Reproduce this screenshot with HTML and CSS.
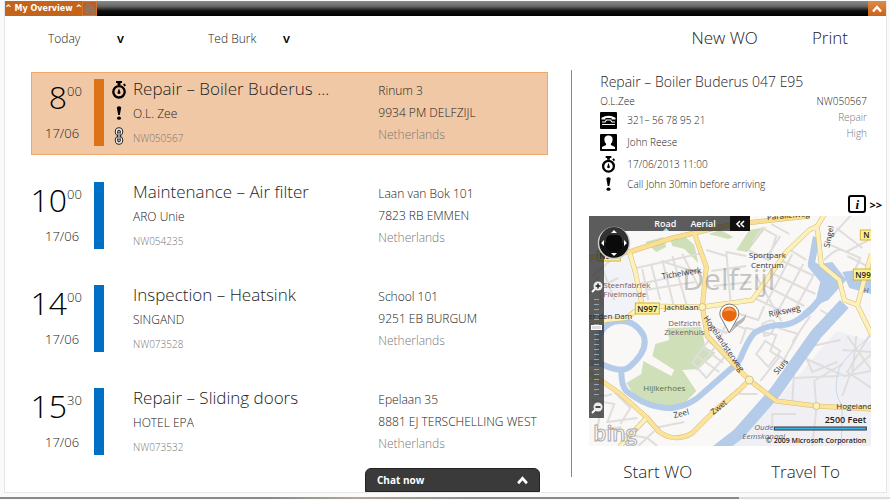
FILE: index.html
```
<!DOCTYPE html>
<html lang="en">
<head>
    <meta charset="UTF-8">
    <meta name="viewport" content="width=device-width, initial-scale=1.0">
    <title>My Overview</title>
    <link rel="stylesheet" href="styles.css">
</head>
<body>
    <!-- shared icons -->
    <svg class="sprite" aria-hidden="true">
        <symbol id="icon-timer" viewBox="0 0 16 18">
            <path d="M5 0h6v2H9.500v2h-3V2H5z"/>
            <path d="M12 3.500l1.500-1 1.500 1.700-1.500 1.300z"/>
            <circle cx="8" cy="10.800" r="5.700" fill="none" stroke="currentColor" stroke-width="2.400"/>
            <path d="M8 7.200l1.300 3.800a1.400 1.400 0 1 1-2.600 0z"/>
        </symbol>
        <symbol id="icon-alert" viewBox="0 0 6 14">
            <path d="M.8 1.500Q3-.8 5.200 1.500L3.800 9H2.200z"/>
            <ellipse cx="3" cy="12.200" rx="2" ry="1.600"/>
        </symbol>
        <symbol id="icon-link" viewBox="0 0 10 18">
            <g fill="none" stroke="#222" stroke-width="3.400">
                <rect x="2.500" y="2" width="5" height="5.500" rx="2.500"/>
                <rect x="2.500" y="10.500" width="5" height="5.500" rx="2.500"/>
            </g>
            <g fill="none" stroke="#eee" stroke-width="1.400">
                <rect x="2.500" y="2" width="5" height="5.500" rx="2.500"/>
                <rect x="2.500" y="10.500" width="5" height="5.500" rx="2.500"/>
            </g>
            <path d="M5 5v8" stroke="#222" stroke-width="3"/>
            <path d="M5 5.500v7" stroke="#eee" stroke-width="1.200"/>
        </symbol>
        <symbol id="icon-up" viewBox="0 0 10 8">
            <path d="M1 6.500l4-4.500 4 4.500" fill="none" stroke="currentColor" stroke-width="2.400"/>
        </symbol>
    </svg>

    <div class="window">
        <header class="titlebar">
            <button type="button" class="tab">^ My Overview ^</button>
            <button type="button" class="tab-settings" aria-label="Settings">
                <svg viewBox="0 0 12 12" class="settings-icon">
                    <g fill="none" stroke="#8f7868" stroke-width="1.400">
                        <circle cx="4" cy="3.500" r="2"/>
                        <circle cx="3.500" cy="8.500" r="1.500"/>
                        <circle cx="9" cy="9" r="1.800"/>
                        <path d="M5 5l3 3M8 3v2h2"/>
                    </g>
                </svg>
            </button>
            <button type="button" class="collapse" aria-label="Collapse">
                <svg class="collapse-icon"><use href="#icon-up"/></svg>
            </button>
        </header>

        <nav class="toolbar">
            <div class="filter filter-day">
                <select aria-label="Day"><option>Today</option></select>
                <span class="caret">v</span>
            </div>
            <div class="filter filter-person">
                <select aria-label="Engineer"><option>Ted Burk</option></select>
                <span class="caret">v</span>
            </div>
            <div class="toolbar-actions">
                <button type="button" class="action">New WO</button>
                <button type="button" class="action">Print</button>
            </div>
        </nav>

        <main class="content">
            <section class="orders">
                <article class="order selected">
                    <div class="time"><span class="hour">8</span><span class="minutes">00</span><span class="date">17/06</span></div>
                    <div class="bar"></div>
                    <div class="flags">
                        <svg class="flag-timer"><use href="#icon-timer"/></svg>
                        <svg class="flag-alert"><use href="#icon-alert"/></svg>
                        <svg class="flag-link"><use href="#icon-link"/></svg>
                    </div>
                    <div class="job">
                        <h2>Repair – Boiler Buderus ...</h2>
                        <p class="customer">O.L. Zee</p>
                        <p class="number">NW050567</p>
                    </div>
                    <address>
                        <p>Rinum 3</p>
                        <p>9934 PM DELFZIJL</p>
                        <p class="country">Netherlands</p>
                    </address>
                </article>

                <article class="order">
                    <div class="time"><span class="hour">10</span><span class="minutes">00</span><span class="date">17/06</span></div>
                    <div class="bar"></div>
                    <div class="flags"></div>
                    <div class="job">
                        <h2>Maintenance – Air filter</h2>
                        <p class="customer">ARO Unie</p>
                        <p class="number">NW054235</p>
                    </div>
                    <address>
                        <p>Laan van Bok 101</p>
                        <p>7823 RB EMMEN</p>
                        <p class="country">Netherlands</p>
                    </address>
                </article>

                <article class="order">
                    <div class="time"><span class="hour">14</span><span class="minutes">00</span><span class="date">17/06</span></div>
                    <div class="bar"></div>
                    <div class="flags"></div>
                    <div class="job">
                        <h2>Inspection – Heatsink</h2>
                        <p class="customer">SINGAND</p>
                        <p class="number">NW073528</p>
                    </div>
                    <address>
                        <p>School 101</p>
                        <p>9251 EB BURGUM</p>
                        <p class="country">Netherlands</p>
                    </address>
                </article>

                <article class="order">
                    <div class="time"><span class="hour">15</span><span class="minutes">30</span><span class="date">17/06</span></div>
                    <div class="bar"></div>
                    <div class="flags"></div>
                    <div class="job">
                        <h2>Repair – Sliding doors</h2>
                        <p class="customer">HOTEL EPA</p>
                        <p class="number">NW073532</p>
                    </div>
                    <address>
                        <p>Epelaan 35</p>
                        <p>8881 EJ TERSCHELLING WEST</p>
                        <p class="country">Netherlands</p>
                    </address>
                </article>
            </section>

            <section class="detail">
                <div class="detail-head">
                    <h1>Repair – Boiler Buderus 047 E95</h1>
                    <div class="detail-body">
                        <ul class="facts">
                            <li class="fact-customer">O.L.Zee</li>
                            <li>
                                <svg class="fact-icon" viewBox="0 0 17 17">
                                    <rect width="17" height="17" rx="1"/>
                                    <path d="M1.500 7.500V5.800Q8.500 1.500 15.500 5.800v1.700h-4V6h-6v1.500z" fill="#fff"/>
                                    <path d="M2 10h3l1.500-2h4l1.500 2h3M2 12.500h13" fill="none" stroke="#fff" stroke-width="1.200"/>
                                </svg>
                                <span>321– 56 78 95 21</span>
                            </li>
                            <li>
                                <svg class="fact-icon" viewBox="0 0 17 17">
                                    <rect width="17" height="17" rx="1"/>
                                    <path d="M8.500 1.500C5 1.500 4 4 4.500 6.500c.2 1.500.8 2.500 1.600 3.200V11L2 13v2h13v-2l-4.100-2V9.700c.8-.7 1.400-1.700 1.600-3.200.5-2.500-.5-5-4-5z" fill="#fff"/>
                                </svg>
                                <span>John Reese</span>
                            </li>
                            <li>
                                <svg class="fact-icon"><use href="#icon-timer"/></svg>
                                <span>17/06/2013 11:00</span>
                            </li>
                            <li class="fact-note">
                                <svg class="fact-icon"><use href="#icon-alert"/></svg>
                                <span>Call John 30min before arriving</span>
                            </li>
                        </ul>
                        <div class="meta">
                            <p class="meta-number">NW050567</p>
                            <p>Repair</p>
                            <p>High</p>
                        </div>
                    </div>
                </div>

                <div class="more">
                    <button type="button" class="info">i</button>
                    <a href="#" class="next">&gt;&gt;</a>
                </div>

                <div class="map">
                    <svg class="map-canvas" viewBox="0 0 283 230" preserveAspectRatio="xMidYMid slice">
                        <rect width="283" height="230" fill="#f9f8f6"/>
                        <path d="M0 36l41 0 6 20 7 34-16 12-38 2z" fill="#f2f3f8"/>
                        <path d="M188 185l60-70 35 10v105H142z" fill="#f0f0f4"/>

                        <!-- parks -->
                        <g fill="#cfdfb8">
                            <path d="M38 167l15-9 2-13 28 15 3-6-22-14 3-12 14-4-2-12 34-1 4 20 10 6-17 16-16 1 14 21-12 12-20 5-24-4z"/>
                            <path d="M57 26l18-5 3 10-10 5z"/>
                            <path d="M82 24l14-4 10 9 4 18-14-14-12-3z"/>
                            <path d="M148 34l13-20 17-3-19 25z"/>
                            <path d="M120 18l12-4 13 7-5 2z"/>
                        </g>

                        <!-- side streets -->
                        <g fill="none" stroke="#e0dddd" stroke-width="2">
                            <path d="M48 52l66-15M51 68l38-8M60 84l-6-31M72 84l-9-35M85 88L74 44M98 88L84 40M110 70L94 38M57 74l50-8M76 46l34 11"/>
                            <path d="M123 55l35-5M125 70l38-4M142 84l-4-48 20 4M118 34l20 6"/>
                            <path d="M181 56l46 22M174 68l42 22M166 82l34 16M192 44l34 16M202 34l16 10M204 38l-27 51M215 48l-26 48M226 58l-22 40M168 60l25 45"/>
                            <path d="M160 34l20 10 8-24-14-8-10 14M192 20l-14 22M183 8l18 10"/>
                            <path d="M236 44q14-15 22-8l22-12M240 28l32 14-12 26M248 12l26 20M262 0l-22 24M283 52l-24-12"/>
                            <path d="M122 110l16 7 10-20 22 7 6-14M130 126l9-21 18 8M152 128l6-16 30 7-6 16 9 6-19 24"/>
                            <path d="M104 146l16-21 18 14-20 23zM109 140l22 16M114 131l21 16M126 132l-18 22"/>
                            <path d="M174 108q14-8 12 2t-10 10zM190 112l20 6-18 32M204 126l18-26M232 94l14 8-10 14M168 138l9-13 15 10-12 16z"/>
                            <path d="M216 142l40 18 27-5M224 130l28-6M206 162l45-2M204 185l2-32-16-14M228 190l-2-25 28-17M228 193l-4 37M184 214v-16h24M218 142l6 14 25-10"/>
                            <path d="M259 120l24 34M283 116l-24 40 24 16M254 134l29 2M262 158l-8 22M268 120l-4 36 19-18"/>
                            <path d="M0 166q14-6 10 6t14 6M4 184l22 4-7 18 30-4M0 194l12 4-4 18 25-5M26 176l16 16-10 16M36 218l23 4 10 8M66 215l-16 15M96 206l-30 6M151 178h18"/>
                            <path d="M0 76l30-14M4 60l28-24M14 90l-5-30M14 52l12 32"/>
                        </g>

                        <!-- water -->
                        <g fill="none" stroke="#b4cbe9" stroke-linejoin="round">
                            <path d="M11 147V120q6-15 22-15 14 0 22 14 6 15-14 32-8 7-30-4H0M33 155q0 15 5 20 22 18 46 17 18-2 32-16l24-21q12-9 14-17 7-16 12-21 12-8 28-8 12 0 28-15" stroke-width="6"/>
                            <path d="M216 99q16-12 29-37l-22-14 5-27" stroke-width="7"/>
                            <path d="M128 235l22-17 37-42 41-58 28-30" stroke-width="12"/>
                        </g>
                        <path d="M219 50l25-4 14 18-18 20-14 6 6-24zM254 56l14-2 15 8v16l-22-6zM141 218l20-16 4 8-22 16z" fill="#b4cbe9"/>
                        <path d="M283 120q-24 18-32 32-8 24 3 38l-1 40" fill="none" stroke="#c6d8ef"/>

                        <!-- main roads: casing, then surface -->
                        <g fill="none" stroke="#d3bd78" stroke-width="5" stroke-linejoin="round">
                            <path d="M0 42l41-6 43-14 22-5 25-6 27-4 63-7"/>
                            <path d="M41 36l6 20 7 34 60 1 50-7 34-48 23-22 8-4 8-13M229 12l4 37 18 15 5 20 13 5M283 38l-14 51 14 29M0 106l38-4 16-12"/>
                            <path d="M106 17l12 34-4 40 5 29 30 32 12 12 27 21 40 5 55 3"/>
                            <path d="M161 164l-10 10-27 23-20 20q-17 10-33-1L58 201 31 177 0 156M59 201l-28 30"/>
                        </g>
                        <g fill="none" stroke="#fdf0b8" stroke-width="4" stroke-linejoin="round">
                            <path d="M41 36l6 20 7 34 60 1 50-7 34-48 23-22 8-4 8-13M229 12l4 37 18 15 5 20 13 5M283 38l-14 51 14 29M0 106l38-4 16-12M59 201l-28 30"/>
                            <path d="M0 42l41-6 43-14 22-5 25-6 27-4 63-7" stroke="#fadf90"/>
                            <path d="M106 17l12 34-4 40 5 29 30 32 12 12 27 21 40 5 55 3" stroke="#fbe39a"/>
                            <path d="M161 164l-10 10-27 23-20 20q-17 10-33-1L58 201 31 177 0 156" stroke="#fbe39a"/>
                        </g>
                        <g fill="#fdf0b8" stroke="#d5c387">
                            <circle cx="114" cy="91" r="3.500"/>
                            <circle cx="161" cy="164" r="4"/>
                            <circle cx="228" cy="190" r="3.500"/>
                        </g>

                        <!-- place names -->
                        <text x="94" y="74" class="city">Delfzijl</text>
                        <g class="place">
                            <text x="179" y="42" text-anchor="middle">Sportpark</text>
                            <text x="179" y="52" text-anchor="middle">Centrum</text>
                            <text x="15" y="72" class="poi">Steenfabriek</text>
                            <text x="15" y="81" class="poi">Fivelmonde</text>
                            <text x="96" y="110" text-anchor="middle" class="poi">Delfzicht</text>
                            <text x="96" y="119" text-anchor="middle" class="poi">Ziekenhuis</text>
                            <text x="55" y="175" class="park">Hijlkerhoes</text>
                            <text x="166" y="214" class="canal">Oude</text>
                            <text x="154" y="223" class="canal">Eemskanaal</text>
                            <text x="275" y="77" class="canal">H</text>
                        </g>
                        <g class="street">
                            <text transform="translate(74 63) rotate(-9)">Tichelwerk</text>
                            <text x="76" y="94">Jachtlaan</text>
                            <text transform="translate(181 101) rotate(-12)">Rijksweg</text>
                            <text transform="translate(241 32) rotate(-78)">Singel</text>
                            <text transform="translate(189 159) rotate(-50)">Sluis</text>
                            <text transform="translate(86 202) rotate(-14)">Zeel</text>
                            <text transform="translate(125 199) rotate(-38)">Zwet</text>
                            <text transform="translate(115 102) rotate(56)">Hogelandsterweg</text>
                            <text x="248" y="193">Hogeland</text>
                            <text x="0" y="103">er den Dam</text>
                            <text transform="translate(179 4) rotate(-5)">Parallelweg</text>
                        </g>
                        <g class="shield">
                            <rect x="9" y="35" width="23" height="10"/>
                            <text x="11" y="43">N997</text>
                            <rect x="47" y="87" width="24" height="11"/>
                            <text x="49" y="96">N997</text>
                            <rect x="265" y="53" width="24" height="11"/>
                            <text x="267" y="62">N99</text>
                            <rect x="272" y="14" width="14" height="10"/>
                            <text x="275" y="22">N</text>
                        </g>

                        <!-- pin -->
                        <path d="M142 117l6-11q10-5 10-10 0 10-8 13z" fill="#777" opacity=".5"/>
                        <path d="M141 117l-7-13a9.500 9.500 0 1 1 14 0z" fill="#fff" stroke="#777"/>
                        <circle cx="141" cy="98" r="7.500" fill="#e8660c"/>
                        <path d="M135 96q6-9 12 0-6-3-12 0z" fill="#f7a463"/>

                        <text x="5" y="225" class="logo">bing</text>
                        <path d="M22 213l3-2v3z" fill="#f28a1c"/>

                        <!-- scale -->
                        <text x="278" y="207" text-anchor="end" class="scale">2500 Feet</text>
                        <rect x="186" y="211" width="92" height="3" fill="#38b6f1" stroke="#333"/>
                        <text x="278" y="227" text-anchor="end" class="copyright">© 2009 Microsoft Corporation</text>
                    </svg>
                    <div class="map-views">
                        <button type="button" class="view active">Road</button>
                        <button type="button" class="view">Aerial</button>
                        <button type="button" class="view-hide" aria-label="Hide">
                            <svg viewBox="0 0 10 8" class="hide-icon"><path d="M5 1L2 4l3 3M9 1L6 4l3 3" fill="none" stroke="#fff" stroke-width="1.600"/></svg>
                        </button>
                    </div>
                    <div class="map-zoom">
                        <button type="button" class="zoom" aria-label="Zoom in">
                            <svg viewBox="0 0 12 12" class="zoom-icon"><path d="M5 7l-4 4" stroke="#fff" stroke-width="2"/><circle cx="7" cy="5" r="4.500" fill="#eee"/><path d="M4.500 5h5M7 2.500v5" stroke="#222" stroke-width="1.400"/></svg>
                        </button>
                        <div class="zoom-track"><span class="zoom-thumb"></span></div>
                        <button type="button" class="zoom" aria-label="Zoom out">
                            <svg viewBox="0 0 12 12" class="zoom-icon"><path d="M5 7l-4 4" stroke="#fff" stroke-width="2"/><circle cx="7" cy="5" r="4.500" fill="#eee"/><path d="M4.500 5h5" stroke="#222" stroke-width="1.600"/></svg>
                        </button>
                    </div>
                    <button type="button" class="compass" aria-label="Pan">
                        <svg viewBox="0 0 34 34" class="compass-icon">
                            <circle cx="17" cy="17" r="15.500" fill="#111" stroke="#ccc" stroke-width="1.500"/>
                            <path d="M3 15a14 14 0 0 1 28 0q-14 6-28 0z" fill="#333"/>
                            <rect x="9" y="9" width="16" height="16" rx="5" fill="#0a0a0a"/>
                            <path d="M17 4l3 3h-6zM17 30l3-3h-6zM4 17l3-3v6zM30 17l-3-3v6z" fill="#fff"/>
                        </svg>
                    </button>
                </div>

                <div class="detail-actions">
                    <button type="button" class="action">Start WO</button>
                    <button type="button" class="action">Travel To</button>
                </div>
            </section>
        </main>

        <button type="button" class="chat">
            <span>Chat now</span>
            <svg class="chat-icon"><use href="#icon-up"/></svg>
        </button>
    </div>
    <div class="desktop-edge"></div>
</body>
</html>
```
FILE: styles.css
```
* {
    box-sizing: border-box;
}

body {
    font-family: "Open Sans", "Noto Sans", sans-serif;
    font-weight: 300;
    background-color: #fafafa;
    color: #222;
    margin: 0;
    padding: 1px 3px 0 4px;
    display: flex;
    flex-direction: column;
    min-height: 100vh;
}

h1, h2, p, ul {
    margin: 0;
    padding: 0;
    font-weight: 300;
    white-space: nowrap;
}

button, select {
    font: inherit;
    color: inherit;
    background: none;
    border: none;
    margin: 0;
    padding: 0;
    cursor: pointer;
}

.sprite {
    position: absolute;
    width: 0;
    height: 0;
}

.window {
    position: relative;
    flex: 1;
    display: flex;
    flex-direction: column;
    background-color: #fff;
    border: 1px solid #e6e6e6;
    border-top: none;
}

/* title bar */
.titlebar {
    display: flex;
    height: 15px;
    background: linear-gradient(#8a8a8a, #666 35%, #111 65%, #000);
}

.tab {
    background-color: #c4641a;
    color: #fff;
    font: bold 8px/14px "DejaVu Sans", sans-serif;
    padding: 0;
}

.tab-settings {
    width: 15px;
    background-color: #b5622a;
    border: 1px solid #d9732a;
}

.settings-icon {
    display: block;
    width: 12px;
    height: 12px;
    margin: auto;
}

.collapse {
    width: 18px;
    margin-left: auto;
    background: linear-gradient(#e08a45, #c9631a);
    color: #fff;
}

.collapse-icon {
    display: block;
    width: 10px;
    height: 8px;
    margin: auto;
}

/* toolbar */
.toolbar {
    display: flex;
    align-items: center;
    height: 44px;
    padding: 0 38px 0 43px;
}

.filter {
    position: relative;
    display: flex;
    align-items: center;
    width: 160px;
}

.filter select {
    appearance: none;
    width: 84px;
    font-size: 12px;
}

.filter .caret {
    position: absolute;
    left: 69px;
    color: #000;
    font-size: 13px;
    font-weight: 600;
    pointer-events: none;
}

.filter-person .caret {
    left: 75px;
}

.toolbar-actions {
    display: flex;
    gap: 54px;
    margin-left: auto;
}

.action {
    font-size: 17px;
    line-height: 24px;
    white-space: nowrap;
}

/* columns */
.content {
    flex: 1;
    display: grid;
    grid-template-columns: minmax(0, 9fr) minmax(0, 5fr);
    padding-top: 10px;
}

.orders {
    display: flex;
    flex-direction: column;
    gap: 20px;
    padding: 2px 23px 0 26px;
}

.order {
    display: grid;
    grid-template-columns: 62px 10px 29px minmax(0, 1fr) 169px;
    height: 83px;
    padding: 6px 0;
    border: 1px solid transparent;
}

.selected {
    background-color: #f1c8a5;
    border-color: #f0a868;
}

.time {
    display: grid;
    grid-template-columns: 35px 1fr;
    grid-template-rows: 38px 1fr;
}

.hour {
    justify-self: end;
    font-size: 32px;
    line-height: 36px;
    color: #000;
}

.minutes {
    font-size: 13px;
    line-height: 24px;
}

.date {
    grid-column: 1 / 3;
    font-size: 13px;
    line-height: 32px;
    padding-left: 13px;
}

.bar {
    height: 67px;
    background-color: #0070c6;
}

.selected .bar {
    background-color: #db7416;
}

.flags {
    display: flex;
    flex-direction: column;
    align-items: center;
    gap: 7px;
    padding-top: 2px;
    color: #000;
}

.flag-timer {
    width: 16px;
    height: 18px;
}

.flag-alert {
    width: 6px;
    height: 14px;
}

.flag-link {
    width: 10px;
    height: 18px;
}

.job h2 {
    font-size: 17px;
    line-height: 20px;
}

.customer {
    font-size: 12px;
    line-height: 30px;
}

.number {
    font-size: 10px;
    line-height: 18px;
    color: #777;
}

address {
    padding-top: 1px;
    font-size: 12px;
    line-height: 22px;
    font-style: normal;
}

.country {
    color: #777;
}

/* detail panel */
.detail {
    display: flex;
    flex-direction: column;
    padding-right: 15px;
    padding-left: 18px;
    position: relative;
}

.detail::before {
    content: "";
    position: absolute;
    left: 0;
    top: 0;
    bottom: 15px;
    width: 1px;
    background-color: #888;
}

.detail-head {
    padding: 1px 4px 0 11px;
}

.detail-head h1 {
    font-size: 14px;
    line-height: 22px;
}

.detail-body {
    display: flex;
    justify-content: space-between;
    font-size: 10px;
}

.facts {
    list-style: none;
}

.facts li {
    display: flex;
    align-items: center;
    gap: 10px;
    height: 22px;
}

.facts .fact-customer {
    height: 16px;
}

.facts .fact-note {
    height: 18px;
}

.fact-icon {
    width: 17px;
    height: 17px;
    color: #000;
}

.fact-note .fact-icon {
    height: 14px;
}

.meta {
    line-height: 16px;
    text-align: right;
    color: #777;
}

.meta-number {
    color: #222;
}

.more {
    display: flex;
    justify-content: flex-end;
    align-items: center;
    gap: 3px;
    height: 22px;
    margin-right: -11px;
    color: #000;
}

.info {
    width: 18px;
    height: 18px;
    border: 2px solid #000;
    border-radius: 3px;
    font: italic bold 13px/13px "Liberation Serif", serif;
}

.next {
    color: #000;
    font-size: 11px;
    font-weight: 700;
    text-decoration: none;
}

/* map */
.map {
    position: relative;
    height: 230px;
    margin-top: 1px;
    overflow: hidden;
}

.map-canvas {
    display: block;
    width: 100%;
    height: 100%;
}

.city {
    font-size: 30px;
    font-weight: 400;
    fill: #777;
    opacity: 0.4;
}

.place,
.street {
    font-size: 8px;
    font-weight: 400;
    fill: #333;
}

.place .poi {
    fill: #7a5c68;
}

.place .park {
    fill: #5a7048;
}

.place .canal {
    fill: #667;
    font-style: italic;
}

.shield rect {
    fill: #fdf08f;
    stroke: #d6b52e;
}

.shield text {
    font-size: 8px;
    font-weight: 600;
    fill: #222;
}

.logo {
    font-size: 21px;
    font-weight: 600;
    fill: #fff;
    stroke: #aaa;
    stroke-width: 1px;
}

.scale {
    font-size: 9px;
    font-weight: 600;
    fill: #222;
}

.copyright {
    font-size: 7px;
    font-weight: 600;
    fill: #222;
}

.map-views {
    position: absolute;
    top: 0;
    left: 0;
    display: flex;
    align-items: center;
    gap: 14px;
    width: 161px;
    height: 15px;
    padding-left: 65px;
    background-color: rgba(40, 40, 40, 0.75);
    color: #fff;
}

.view {
    position: relative;
    font-size: 9px;
    font-weight: 600;
    line-height: 15px;
}

.view.active::after {
    content: "";
    position: absolute;
    left: 9px;
    bottom: 0;
    border: 3px solid transparent;
    border-top: none;
    border-bottom-color: #a8dcf0;
}

.view-hide {
    width: 20px;
    height: 15px;
    margin-left: auto;
    background-color: #111;
}

.hide-icon {
    display: block;
    width: 10px;
    height: 8px;
    margin: auto;
}

.map-zoom {
    position: absolute;
    top: 15px;
    left: 0;
    display: flex;
    flex-direction: column;
    align-items: center;
    width: 15px;
    height: 187px;
    padding: 50px 0 4px;
    background-color: rgba(40, 40, 40, 0.75);
}

.zoom-icon {
    display: block;
    width: 12px;
    height: 12px;
}

.zoom-track {
    flex: 1;
    width: 5px;
    margin: 6px 0;
    background: repeating-linear-gradient(#8fa6b4 0 1px, transparent 1px 5px);
}

.zoom-thumb {
    display: block;
    width: 11px;
    height: 5px;
    margin: 26px -3px 0;
    background-color: #ddd;
    border: 1px solid #fff;
}

.compass {
    position: absolute;
    top: 10px;
    left: 8px;
}

.compass-icon {
    display: block;
    width: 34px;
    height: 34px;
}

.detail-actions {
    display: flex;
    justify-content: space-between;
    padding: 14px 31px 0 34px;
}

/* chat */
.chat {
    position: absolute;
    left: 360px;
    bottom: 0;
    display: flex;
    justify-content: space-between;
    align-items: center;
    width: 175px;
    height: 24px;
    padding: 0 11px;
    background-color: #3a3a3a;
    border: 1px solid #222;
    border-radius: 6px 6px 0 0;
    color: #fff;
    font-size: 10px;
    font-weight: 700;
}

.chat-icon {
    width: 11px;
    height: 9px;
}

.desktop-edge {
    height: 2px;
    margin: 4px -3px 1px -4px;
    background: linear-gradient(90deg, #888, #888 30%, #b0a898 40%, #888 55%, #888 83%, #ddd 83%);
}
```
